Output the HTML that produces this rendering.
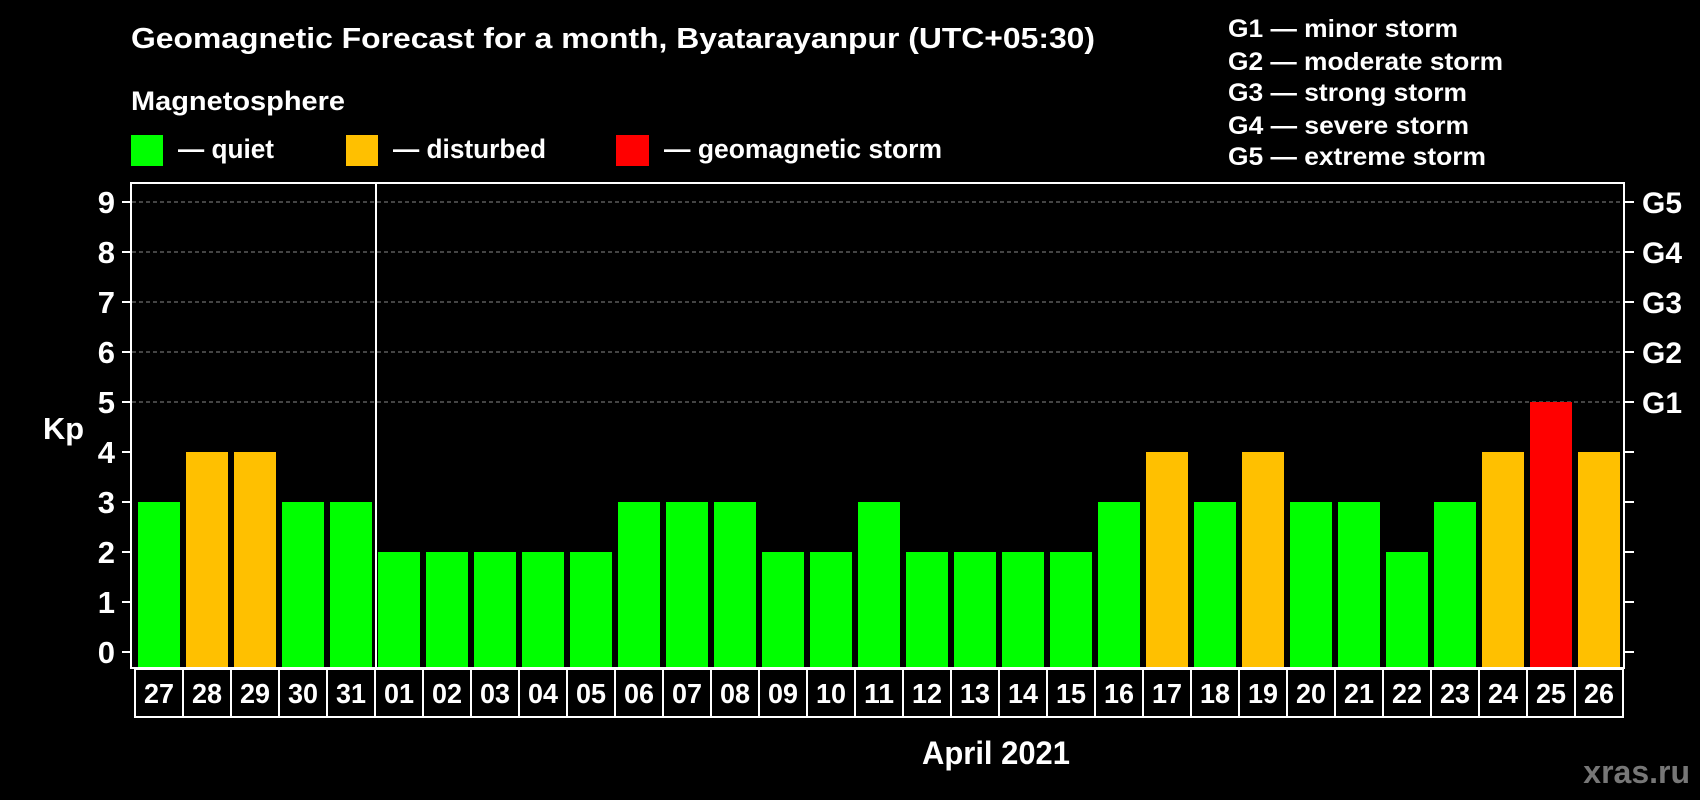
<!DOCTYPE html>
<html><head><meta charset="utf-8"><style>
html,body{margin:0;padding:0;background:#000;}
svg{display:block;}
text{font-family:"Liberation Sans",Arial,sans-serif;font-weight:bold;fill:#fff;}
</style></head><body>
<svg width="1700" height="800" viewBox="0 0 1700 800" xmlns="http://www.w3.org/2000/svg">
<rect width="1700" height="800" fill="#000"/>
<text x="131" y="48" font-size="29" textLength="964" lengthAdjust="spacingAndGlyphs">Geomagnetic Forecast for a month, Byatarayanpur (UTC+05:30)</text>
<text x="131" y="110" font-size="27" textLength="214" lengthAdjust="spacingAndGlyphs">Magnetosphere</text>
<rect x="131" y="135" width="32" height="31" fill="#00ff00"/>
<text x="178" y="158" font-size="27" textLength="96" lengthAdjust="spacingAndGlyphs">— quiet</text>
<rect x="346" y="135" width="32" height="31" fill="#ffc000"/>
<text x="393" y="158" font-size="27" textLength="153" lengthAdjust="spacingAndGlyphs">— disturbed</text>
<rect x="616" y="135" width="33" height="31" fill="#ff0000"/>
<text x="664" y="158" font-size="27" textLength="278" lengthAdjust="spacingAndGlyphs">— geomagnetic storm</text>
<g font-size="25">
<text x="1228" y="37" textLength="230" lengthAdjust="spacingAndGlyphs">G1 — minor storm</text>
<text x="1228" y="70" textLength="275" lengthAdjust="spacingAndGlyphs">G2 — moderate storm</text>
<text x="1228" y="101" textLength="239" lengthAdjust="spacingAndGlyphs">G3 — strong storm</text>
<text x="1228" y="134" textLength="241" lengthAdjust="spacingAndGlyphs">G4 — severe storm</text>
<text x="1228" y="165" textLength="258" lengthAdjust="spacingAndGlyphs">G5 — extreme storm</text>
</g>
<g stroke="#888" stroke-width="1" stroke-dasharray="4,3">
<line x1="132" y1="202" x2="1623" y2="202"/>
<line x1="132" y1="252" x2="1623" y2="252"/>
<line x1="132" y1="302" x2="1623" y2="302"/>
<line x1="132" y1="352" x2="1623" y2="352"/>
<line x1="132" y1="402" x2="1623" y2="402"/>
</g>
<g id="bars"></g>
<rect x="131" y="183" width="1493" height="485" fill="none" stroke="#fff" stroke-width="2"/>
<line x1="376" y1="183" x2="376" y2="668" stroke="#fff" stroke-width="2"/>
<g stroke="#fff" stroke-width="2" id="ticks"></g>
<g font-size="31" text-anchor="end" id="ylab"></g>
<g font-size="30" id="glab"></g>
<text x="43" y="439" font-size="31" textLength="41" lengthAdjust="spacingAndGlyphs">Kp</text>
<g id="dates" font-size="28" text-anchor="middle"></g>
<rect x="135" y="669" width="1488" height="48" fill="none" stroke="#fff" stroke-width="2"/>
<text x="996" y="764" font-size="32" text-anchor="middle" textLength="148" lengthAdjust="spacingAndGlyphs">April 2021</text>
<text x="1690" y="783" font-size="32" text-anchor="end" style="fill:#777">xras.ru</text>
</svg>
<script>
var NS="http://www.w3.org/2000/svg";
function el(p,t,a,txt){var e=document.createElementNS(NS,t);for(var k in a)e.setAttribute(k,a[k]);if(txt!=null)e.textContent=txt;document.getElementById(p).appendChild(e);}
var d=["27","28","29","30","31","01","02","03","04","05","06","07","08","09","10","11","12","13","14","15","16","17","18","19","20","21","22","23","24","25","26"];
var v=[3,4,4,3,3,2,2,2,2,2,3,3,3,2,2,3,2,2,2,2,3,4,3,4,3,3,2,3,4,5,4];
for(var i=0;i<31;i++){
 var c=v[i]==5?"#ff0000":(v[i]==4?"#ffc000":"#00ff00");
 var y=652-50*v[i];
 el("bars","rect",{x:138+48*i,y:y,width:42,height:668-y,fill:c});
 el("dates","text",{x:159+48*i,y:703,textLength:30,lengthAdjust:"spacingAndGlyphs"},d[i]);
 if(i>0)el("dates","line",{x1:135+48*i,y1:669,x2:135+48*i,y2:717,stroke:"#fff","stroke-width":2});
}
var g=["","","","","","G1","G2","G3","G4","G5"];
for(var k=0;k<=9;k++){
 var yy=652-50*k;
 el("ticks","line",{x1:122,y1:yy,x2:131,y2:yy});
 el("ticks","line",{x1:1624,y1:yy,x2:1634,y2:yy});
 el("ylab","text",{x:115,y:yy+11},String(k));
 if(g[k])el("glab","text",{x:1642,y:yy+11,textLength:40,lengthAdjust:"spacingAndGlyphs"},g[k]);
}
</script>
</body></html>
